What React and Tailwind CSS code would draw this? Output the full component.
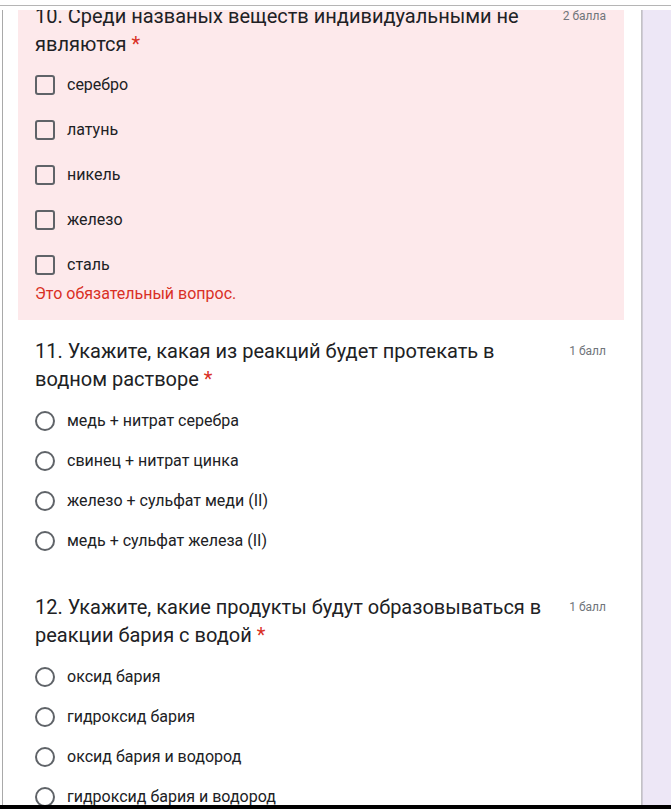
const Q10_OPTIONS = ['серебро', 'латунь', 'никель', 'железо', 'сталь']
const Q11_OPTIONS = [
  'медь + нитрат серебра',
  'свинец + нитрат цинка',
  'железо + сульфат меди (II)',
  'медь + сульфат железа (II)',
]
const Q12_OPTIONS = ['оксид бария', 'гидроксид бария', 'оксид бария и водород', 'гидроксид бария и водород']

function Title({ text, points }) {
  return (
    <div className="flex justify-between">
      <div className="w-[525px] text-[20px] leading-[28px] text-[#202124]">
        {text} <span className="text-[#d93025]">*</span>
      </div>
      <div className="text-[12px] leading-[28px] text-[#70757a] whitespace-nowrap">{points}</div>
    </div>
  )
}

function Checkbox({ label }) {
  return (
    <div className="flex h-[24px] items-center gap-[12px]">
      <div className="h-[20px] w-[20px] rounded-[3px] border-2 border-[#5f6368]" />
      <span className="text-[16px] text-[#202124]">{label}</span>
    </div>
  )
}

function Radio({ label }) {
  return (
    <div className="flex h-[24px] items-center gap-[12px]">
      <div className="h-[20px] w-[20px] rounded-full border-2 border-[#5f6368]" />
      <span className="text-[16px] text-[#202124]">{label}</span>
    </div>
  )
}

export default function App() {
  return (
    <div
      className="flex h-[809px] w-[671px] flex-col overflow-hidden bg-white"
      style={{ fontFamily: 'Roboto, "Noto Sans", sans-serif' }}
    >
      <div className="h-[5px]" />
      <div className="h-px bg-[#b5b5b5]" />
      <div className="h-[4px]" />

      <div className="flex min-h-0 flex-1">
        <div className="w-[2px]" />
        <div className="w-px bg-[#a9a9a9]" />

        <div className="w-[638px] overflow-hidden bg-white pl-[15px]">
          <div className="w-[606px]">
            {/* Q10 — required, unanswered */}
            <div className="-mt-[8px] bg-[#fde9eb] pb-[16px] pl-[17px] pr-[18px]">
              <Title text="10. Среди названых веществ индивидуальными не являются" points="2 балла" />
              <div className="mt-[15px] flex flex-col gap-[21px]">
                {Q10_OPTIONS.map(o => <Checkbox key={o} label={o} />)}
              </div>
              <p className="mt-[7px] text-[16px] leading-[20px] text-[#d93025]">Это обязательный вопрос.</p>
            </div>

            {/* Q11 */}
            <div className="pb-[23px] pl-[17px] pr-[18px] pt-[17px]">
              <Title text="11. Укажите, какая из реакций будет протекать в водном растворе" points="1 балл" />
              <div className="mt-[16px] flex flex-col gap-[16px]">
                {Q11_OPTIONS.map(o => <Radio key={o} label={o} />)}
              </div>
            </div>

            {/* Q12 */}
            <div className="pl-[17px] pr-[18px] pt-[17px]">
              <Title text="12. Укажите, какие продукты будут образовываться в реакции бария с водой" points="1 балл" />
              <div className="mt-[16px] flex flex-col gap-[16px]">
                {Q12_OPTIONS.map(o => <Radio key={o} label={o} />)}
              </div>
            </div>
          </div>
        </div>

        <div className="w-[2px] bg-gradient-to-r from-[#bdbdbd] to-[#d6d1e0]" />
        <div className="flex-1 bg-[#ede7f6]" />
      </div>

      <div className="h-[4px] bg-black" />
    </div>
  )
}
